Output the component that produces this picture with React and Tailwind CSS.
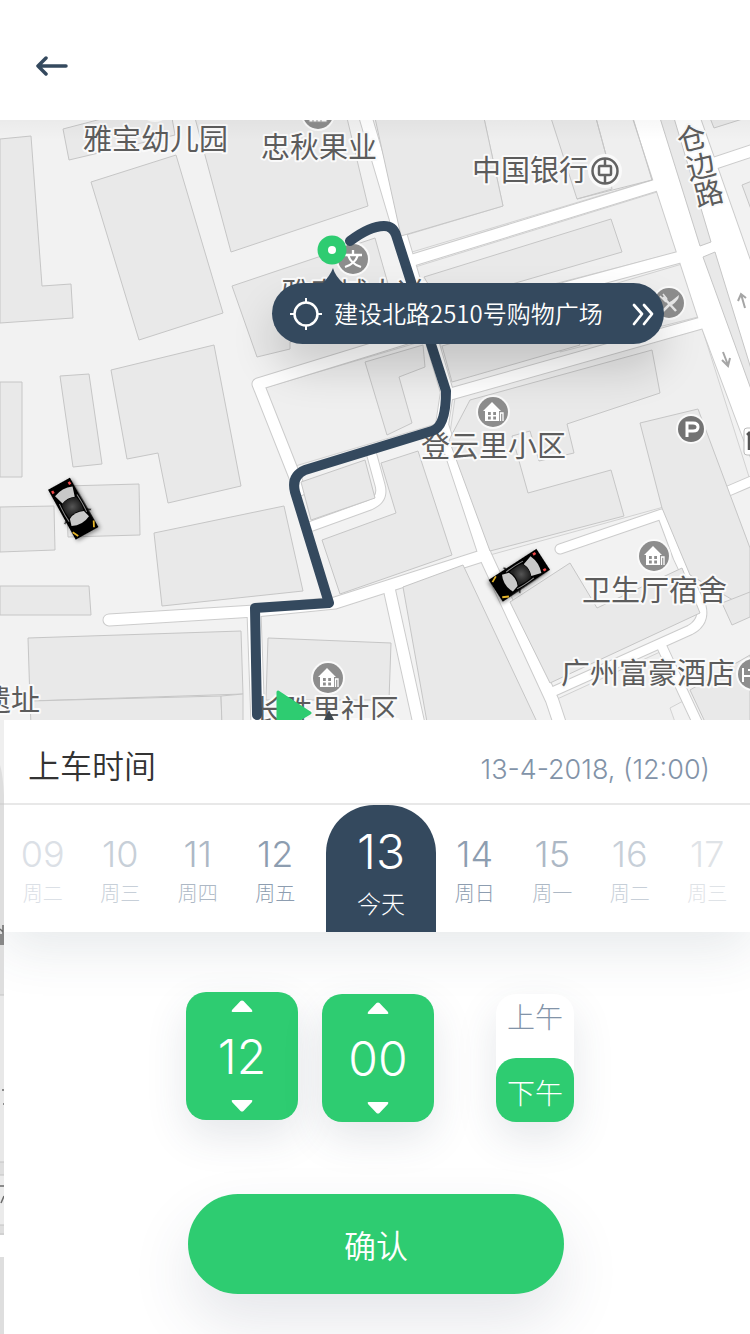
import React, { useState } from "react";

const BUILDINGS = [
  "0,139 31,136 42,286 71,284 73,318 0,323",
  "63,129 105,118 172,118 175,135 69,160",
  "91,182 176,155 223,313 139,340",
  "195,118 347,118 368,206 231,252",
  "232,286 375,238 396,312 290,342 290,349 257,357",
  "0,382 22,382 22,477 0,477",
  "60,376 89,374 102,464 73,467",
  "111,370 214,345 241,486 168,503 158,453 127,459",
  "66,486 139,484 140,535 68,537",
  "0,507 54,506 55,550 0,552",
  "0,586 89,586 91,615 0,615",
  "154,533 284,506 303,591 162,606",
  "28,638 241,631 243,694 30,701",
  "30,701 221,696 222,725 31,725",
  "221,696 243,694 243,725 222,725",
  "268,638 391,643 389,700 266,700",
  "375,118 484,118 503,206 401,236",
  "551,118 596,118 606,155 612,189 577,199",
  "424,277 611,219 622,252 440,305",
  "442,346 560,312 580,345 452,382",
  "470,400 652,350 660,393 567,424 574,453 539,461 530,431 512,436 528,493 611,470 624,516 490,551 449,440",
  "640,423 698,409 750,548 750,610 690,575 662,508",
  "510,602 570,563 597,608 682,568 700,613 550,683",
  "403,587 463,565 537,722 427,722",
  "301,482 365,460 375,498 311,520",
  "322,540 396,513 381,463 418,451 452,555 340,594",
  "365,362 423,345 425,367 399,377 412,423 387,435",
  "722,603 750,592 750,617 732,625",
  "690,690 750,655 750,722 705,722",
  "742,185 752,181 752,212",
  "710,118 714,128 752,116",
];

const PARCELS = [
  "403,236 503,206 484,118 635,118 652,180 412,252",
  "412,268 657,192 678,252 550,285 430,320",
  "560,300 682,264 698,317 560,352",
  "455,398 702,328 750,480 660,508 490,555 449,440",
  "264,388 440,336 445,391 436,424 292,467",
  "555,700 660,652 685,700 670,708 675,722 563,722",
];

const ROADS = [
  ["M109 620 L255 611 L335 603 L485 555", 11],
  ["M254 612 L258 724", 13],
  ["M300 490 L258 384 L375 348 L565 288 L684 256", 11],
  ["M364 112 L405 250 L447 392 L442 425 L485 555 L552 700 L560 724", 12],
  ["M413 260 L660 184", 11],
  ["M447 395 L705 322", 11],
  ["M312 526 L370 505 Q384 499 380 485 L371 452", 9],
  ["M389 588 L419 724", 11],
  ["M560 549 L662 514 L678 557 L701 606 Q705 622 690 630 L550 693", 9],
  ["M662 647 L698 724", 9],
  ["M726 492 L754 480", 9],
  ["M706 166 L754 150", 11],
];

const LABELS = [
  ["雅宝幼儿园", 83, 150],
  ["忠秋果业", 261, 158],
  ["中国银行", 472, 181],
  ["雅泰城大道", 281, 304],
  ["登云里小区", 421, 457],
  ["卫生厅宿舍", 582, 601],
  ["广州富豪酒店", 561, 684],
  ["长胜里社区", 254, 721],
  ["遗址", -18, 711],
];

const ROAD_NAME = [
  ["仓", 692, 149],
  ["边", 701, 177],
  ["路", 709, 204],
];

function Badge({ x, y, children }) {
  return (
    <g transform={`translate(${x} ${y})`}>
      <circle r="17" fill="#fafafa" />
      <circle r="15" fill="#8d8d8d" />
      {children}
    </g>
  );
}

function HouseBadge({ x, y }) {
  return (
    <Badge x={x} y={y}>
      <path
        fill="#fff"
        fillRule="evenodd"
        d="M-10-1 L-1-10 L8-1 H6 V9 H-8 V-1Z M-5 0 H-2.200 V3 H-5Z M0.200 0 H3 V3 H0.200Z M-5 4.500 H-2.200 V7.500 H-5Z M0.200 4.500 H3 V7.500 H0.200Z"
      />
      <path d="M7.500 9 V1 H10 V9" fill="none" stroke="#fff" strokeWidth="1.300" />
    </Badge>
  );
}

function Car({ x, y, angle }) {
  return (
    <g transform={`translate(${x} ${y}) rotate(${angle})`}>
      <g filter="url(#car-shadow)">
        <path d="M-13-28 H12 L13 24 L13 29 H-13 L-13 24Z" fill="#020202" />
        <path d="M-15 10 L-12 8 M15 10 L12 8" stroke="#111" strokeWidth="1.500" />
      </g>
      <path d="M-10-19 Q0-23 10-19 L7-9 Q0-12 -7-9Z" fill="#c9c9c9" />
      <path d="M-8-8 Q0-12 8-8 Q10 0 8 7 Q0 3-8 7 Q-10 0-8-8Z" fill="url(#roof)" />
      <path d="M-8 8 Q0 4 8 8 L10 15 Q0 20-10 15Z" fill="#c9c9c9" />
      <path d="M-10-10 Q-11 2-10 10 M10-10 Q11 2 10 10" fill="none" stroke="#8a8a8a" strokeWidth="1" />
      <path d="M-10-25 v3 M9-25 v3" stroke="#f04848" strokeWidth="2.500" />
      <path d="M-12 21 L-9 27 M12 21 L9 27" stroke="#e5b52a" strokeWidth="1.800" />
    </g>
  );
}

function CityMap() {
  return (
    <svg
      className="block h-full w-full"
      viewBox="0 120 750 600"
      preserveAspectRatio="xMidYMid slice"
      role="img"
      aria-label="地图"
    >
      <defs>
        <filter id="car-shadow" x="-50%" y="-50%" width="200%" height="200%">
          <feDropShadow dx="1" dy="2" stdDeviation="2" floodOpacity="0.450" />
        </filter>
        <radialGradient id="roof">
          <stop offset="0" stopColor="#555" />
          <stop offset="1" stopColor="#222" />
        </radialGradient>
        <linearGradient id="top-shade" x1="0" y1="0" x2="0" y2="1">
          <stop offset="0" stopColor="#000" stopOpacity="0.030" />
          <stop offset="1" stopColor="#000" stopOpacity="0" />
        </linearGradient>
      </defs>
      <rect y="120" width="750" height="600" fill="#f2f2f2" />
      <g fill="#efefef" stroke="#d2d2d2">
        {PARCELS.map((p) => <polygon key={p} points={p} />)}
      </g>
      <g fill="none" stroke="#cccccc" strokeLinecap="round" strokeLinejoin="round">
        {ROADS.map(([d, w]) => <path key={d} d={d} strokeWidth={w + 2} />)}
        <path d="M633 118 L698 317 L744 440 L752 460 V266 L700 118Z" strokeWidth="2" />
      </g>
      <path d="M633 118 L698 317 L744 440 L752 460 V266 L700 118Z" fill="#fff" />
      <g fill="none" stroke="#fff" strokeLinecap="round" strokeLinejoin="round">
        {ROADS.map(([d, w]) => <path key={d} d={d} strokeWidth={w} />)}
      </g>
      <g fill="#e9e9e9" stroke="#c6c6c6" strokeWidth="1">
        {BUILDINGS.map((p) => <polygon key={p} points={p} />)}
        <polygon points="660,118 674,118 711,242 700,246" />
        <polygon points="703,257 715,252 752,372 752,392" />
      </g>
      <path d="M596 118 L606 155 M577 199 L652 180 L633 118" fill="none" stroke="#c6c6c6" />
      <g fill="none" stroke="#a5a5a5" strokeWidth="2">
        <path d="M745 308 L741 294 M738 301 L741 294 L746 298" />
        <path d="M723 352 L728 365 M722 360 L728 366 L730 358" />
      </g>

      <Badge x={155} y={105} />
      <Badge x={318} y={114}>
        <path d="M-9-4 H9 V8 H-9Z M-5 2 V8 M-1 2 V8 M3 2 V8" fill="#fff" stroke="#999" />
      </Badge>
      <circle cx="605" cy="171" r="17" fill="#fafafa" />
      <g fill="none" stroke="#636363" strokeWidth="2.500">
        <circle cx="605" cy="171" r="12.500" />
        <rect x="599" y="166" width="12" height="9" rx="1" />
        <path d="M605 159 V166 M605 175 V183" />
      </g>
      <Badge x={353} y={259}>
        <path d="M-9-4 H9 M0-9 V-4 M-5-4 Q-2 5 8 8 M5-4 Q2 5-8 8" fill="none" stroke="#fff" strokeWidth="2.300" />
      </Badge>
      <Badge x={669} y={303}>
        <path d="M-6-6 L7 8" fill="none" stroke="#e8e8e8" strokeWidth="2.500" />
        <path d="M-9-7 L-4-2 M-6-9 L-2-4 M-4-1 L-2-4" fill="none" stroke="#e8e8e8" strokeWidth="1.500" />
        <path d="M10-8 Q10-3 3 2 L0 0 Z" fill="#e8e8e8" />
        <path d="M3-1 L-6 8" fill="none" stroke="#e8e8e8" strokeWidth="2.500" />
      </Badge>
      <HouseBadge x={493} y={412} />
      <HouseBadge x={654} y={556} />
      <HouseBadge x={328} y={678} />
      <g transform="translate(691 429)">
        <circle r="15" fill="#fafafa" />
        <circle r="13" fill="#737373" />
        <path d="M-4 8 V-6 H2 Q7-6 7-2 Q7 2 2 2 H-4" fill="none" stroke="#fff" strokeWidth="3" />
      </g>
      <Badge x={753} y={674}>
        <path d="M-10-6 V8 M-10 2 H6 M-5-4 H5" fill="none" stroke="#fff" strokeWidth="2" />
      </Badge>
      <rect x="744" y="428" width="12" height="27" rx="3" fill="#fff" stroke="#bbb" />
      <path d="M747 435 L750 432 M749 434 V450" stroke="#555" strokeWidth="2.500" />

      <g
        className="font-['Noto_Sans_CJK_SC',sans-serif] text-[29px] font-normal"
        fill="#5c5c5c"
        stroke="#fafafa"
        strokeWidth="4"
        strokeLinejoin="round"
        paintOrder="stroke"
      >
        {LABELS.map(([t, x, y]) => <text key={t} x={x} y={y}>{t}</text>)}
        {ROAD_NAME.map(([t, x, y]) => (
          <text key={t} x={x} y={y} textAnchor="middle" transform={`rotate(-14 ${x} ${y - 10})`}>{t}</text>
        ))}
      </g>
      <rect y="120" width="750" height="20" fill="url(#top-shade)" />

      <path
        d="M350 241 Q370 226 384 226 Q393 226 396 235 L446 391 Q446 427 432 431 L305 470 Q291 476 295 492 L329 603 L255 608 L257 715"
        fill="none"
        stroke="#34495e"
        strokeWidth="10"
        strokeLinecap="round"
        strokeLinejoin="round"
      />
      <path d="M278 692 L310 713 L278 732Z" fill="#2ecc71" stroke="#2ecc71" strokeWidth="3" strokeLinejoin="round" />
      <path d="M329 710 L335 722 H323Z" fill="#3c4750" />
      <circle cx="332" cy="250" r="14.500" fill="#2ecc71" />
      <circle cx="332" cy="250" r="4" fill="#fff" />
      <Car x={73} y={508} angle={-29} />
      <Car x={520} y={575} angle={57} />
    </svg>
  );
}

function PickupBubble() {
  return (
    <button
      type="button"
      className="absolute top-[163px] left-[272px] flex h-[61px] w-[392px] items-center rounded-full bg-[#34495e] pr-[6px] pl-[18px] text-white shadow-[0_24px_44px_rgba(0,0,0,0.16)]"
    >
      <svg className="absolute -top-[15px] left-[50px] h-4 w-[22px]" viewBox="0 0 22 16" aria-hidden="true">
        <path d="M11 0 Q13 8 22 16 H0 Q8 8 11 0Z" fill="#34495e" />
      </svg>
      <svg className="size-8 shrink-0" viewBox="0 0 32 32" fill="none" stroke="currentColor" strokeWidth="2.500" aria-hidden="true">
        <circle cx="16" cy="16" r="11.500" />
        <path d="M16 0 V5 M16 27 V32 M0 16 H5 M27 16 H32" strokeWidth="2" />
      </svg>
      <span className="ml-3 flex-1 pb-0.5 text-left font-['Noto_Sans_CJK_SC',sans-serif] text-2xl font-[350] whitespace-nowrap">
        建设北路2510号购物广场
      </span>
      <svg className="h-6 w-7 shrink-0" viewBox="0 0 28 24" fill="none" stroke="currentColor" strokeWidth="2.700" strokeLinecap="round" strokeLinejoin="round" aria-hidden="true">
        <path d="M4 3 L12 12 L4 22 M14 3 L22 12 L14 22" />
      </svg>
    </button>
  );
}

const BEFORE = [
  ["09", "周二", "text-[#dbe0e6]"],
  ["10", "周三", "text-[#c7cfd8]"],
  ["11", "周四", "text-[#adb8c5]"],
  ["12", "周五", "text-[#8d9db0]"],
];
const AFTER = [
  ["14", "周日", "text-[#8d9db0]"],
  ["15", "周一", "text-[#adb8c5]"],
  ["16", "周二", "text-[#c7cfd8]"],
  ["17", "周三", "text-[#dfe3e7]"],
];

function Days({ days }) {
  return days.map(([day, week, color]) => (
    <button key={day} type="button" className={`flex flex-1 flex-col items-center pt-7 ${color}`}>
      <span className="font-['Inter',sans-serif] text-4xl leading-[42px] font-light">{day}</span>
      <span className="mt-0.5 text-xl leading-8 font-light">{week}</span>
    </button>
  ));
}

function Stepper({ label, value, onStep }) {
  return (
    <div
      role="group"
      aria-label={label}
      className="flex h-32 w-28 flex-col items-center justify-between rounded-[20px] bg-[#2ecc71] py-2 text-white shadow-[0_16px_40px_rgba(52,73,94,0.13)]"
    >
      <button type="button" aria-label={`${label}加`} onClick={() => onStep(1)}>
        <svg className="block h-3 w-6" viewBox="0 0 24 12" fill="currentColor" aria-hidden="true">
          <path d="M10.500 1 Q12 0 13.500 1 L22 10 Q23 12 21.500 12 H2.500 Q1 12 2 10Z" />
        </svg>
      </button>
      <output className="pt-0.5 font-['Inter',sans-serif] text-5xl leading-[56px] font-light">
        {String(value).padStart(2, "0")}
      </output>
      <button type="button" aria-label={`${label}减`} onClick={() => onStep(-1)}>
        <svg className="block h-3 w-6" viewBox="0 0 24 12" fill="currentColor" aria-hidden="true">
          <path d="M10.500 11 Q12 12 13.500 11 L22 2 Q23 0 21.500 0 H2.500 Q1 0 2 2Z" />
        </svg>
      </button>
    </div>
  );
}

function MapEdge() {
  return (
    <svg className="w-1 shrink-0 self-stretch" viewBox="0 720 4 614" preserveAspectRatio="none" aria-hidden="true">
      <rect y="720" width="4" height="614" fill="#dedede" />
      <path d="M0 720 H4 V795 Q3 775 0 765Z" fill="#efefef" />
      <path d="M0 803 H4 V805 H0Z" fill="#d4d4d4" />
      <path d="M0 995 H4 V1162 H0Z" fill="#e8e8e8" />
      <path d="M0 1175 H4 V1225 H0Z" fill="#ebebeb" />
      <path d="M0 1235 H4 V1257 H0Z" fill="#ffffff" />
      <path d="M0 995 H4 M0 1162 H4 M0 1175 H4 M0 1225 H4 M0 1234 H4" stroke="#c4c4c4" />
      <path d="M0 929 L3 932 M1 934 V945 M3 925 V945 M2 1090 H4 M3 1104 H4 M0 1186 H4 M1 1203 L4 1196" stroke="#6b6b6b" strokeWidth="1.500" />
    </svg>
  );
}

export default function App() {
  const [hour, setHour] = useState(12);
  const [minute, setMinute] = useState(0);
  const [pm, setPm] = useState(true);

  return (
    <div className="flex min-h-screen flex-col bg-white font-['Noto_Sans_CJK_SC',sans-serif]">
      <header className="flex h-[120px] items-center px-9 pt-3">
        <button type="button" aria-label="返回" className="text-[#34495e]">
          <svg className="block h-5 w-8" viewBox="0 0 32 20" fill="none" stroke="currentColor" strokeWidth="3.500" strokeLinecap="round" strokeLinejoin="round" aria-hidden="true">
            <path d="M10 2 L2 10 L10 18 M2 10 H30" />
          </svg>
        </button>
      </header>

      <main className="flex flex-1 flex-col">
        <section className="relative h-[600px] overflow-hidden">
          <CityMap />
          <PickupBubble />
        </section>

        <div className="flex flex-1">
          <MapEdge />
          <section className="flex min-w-0 flex-1 flex-col overflow-hidden">
            <div className="shadow-[0_16px_50px_rgba(52,73,94,0.12)]">
              <div className="flex h-[85px] items-center justify-between border-b-2 border-[#e8e8e8] pr-10 pl-6">
                <h1 className="pt-1 text-[32px] leading-10 font-[350] text-[#333]">上车时间</h1>
                <p className="pt-4 font-['Inter',sans-serif] text-[27px] leading-10 font-light text-[#8293a8]">
                  13-4-2018, (12:00)
                </p>
              </div>
              <div className="flex h-[127px]">
                <div className="mr-3 flex flex-1"><Days days={BEFORE} /></div>
                <button type="button" aria-current="date" className="flex w-[110px] flex-col items-center rounded-t-[48px] bg-[#34495e] pt-4 text-white">
                  <span className="font-['Inter',sans-serif] text-5xl leading-[62px] font-light">13</span>
                  <span className="mt-0.5 text-2xl leading-9 font-light">今天</span>
                </button>
                <div className="mr-1 flex flex-1"><Days days={AFTER} /></div>
              </div>
            </div>

            <div className="mt-[60px] ml-1.5 flex items-start justify-center">
              <Stepper label="小时" value={hour} onStep={(d) => setHour(((hour + d + 11) % 12) + 1)} />
              <div className="mt-0.5 ml-6">
                <Stepper label="分钟" value={minute} onStep={(d) => setMinute((minute + d + 60) % 60)} />
              </div>
              <div className="mt-0.5 ml-[62px] flex h-32 w-[78px] flex-col rounded-[20px] bg-white text-[28px] leading-8 font-light shadow-[0_16px_40px_rgba(52,73,94,0.13)]">
                <button
                  type="button"
                  aria-pressed={!pm}
                  onClick={() => setPm(false)}
                  className={pm ? "h-16 rounded-[20px] pb-5 text-[#8293a8]" : "h-16 rounded-[20px] bg-[#2ecc71] text-white"}
                >
                  上午
                </button>
                <button
                  type="button"
                  aria-pressed={pm}
                  onClick={() => setPm(true)}
                  className={pm ? "h-16 rounded-[20px] bg-[#2ecc71] pt-1 text-white" : "h-16 rounded-[20px] text-[#8293a8]"}
                >
                  下午
                </button>
              </div>
            </div>

            <button
              type="button"
              className="mt-[72px] mr-0.5 mb-10 h-[100px] w-[376px] self-center rounded-full bg-[#2ecc71] text-[32px] font-[350] text-white shadow-[0_28px_60px_rgba(52,60,94,0.13)]"
            >
              确认
            </button>
          </section>
        </div>
      </main>
    </div>
  );
}
